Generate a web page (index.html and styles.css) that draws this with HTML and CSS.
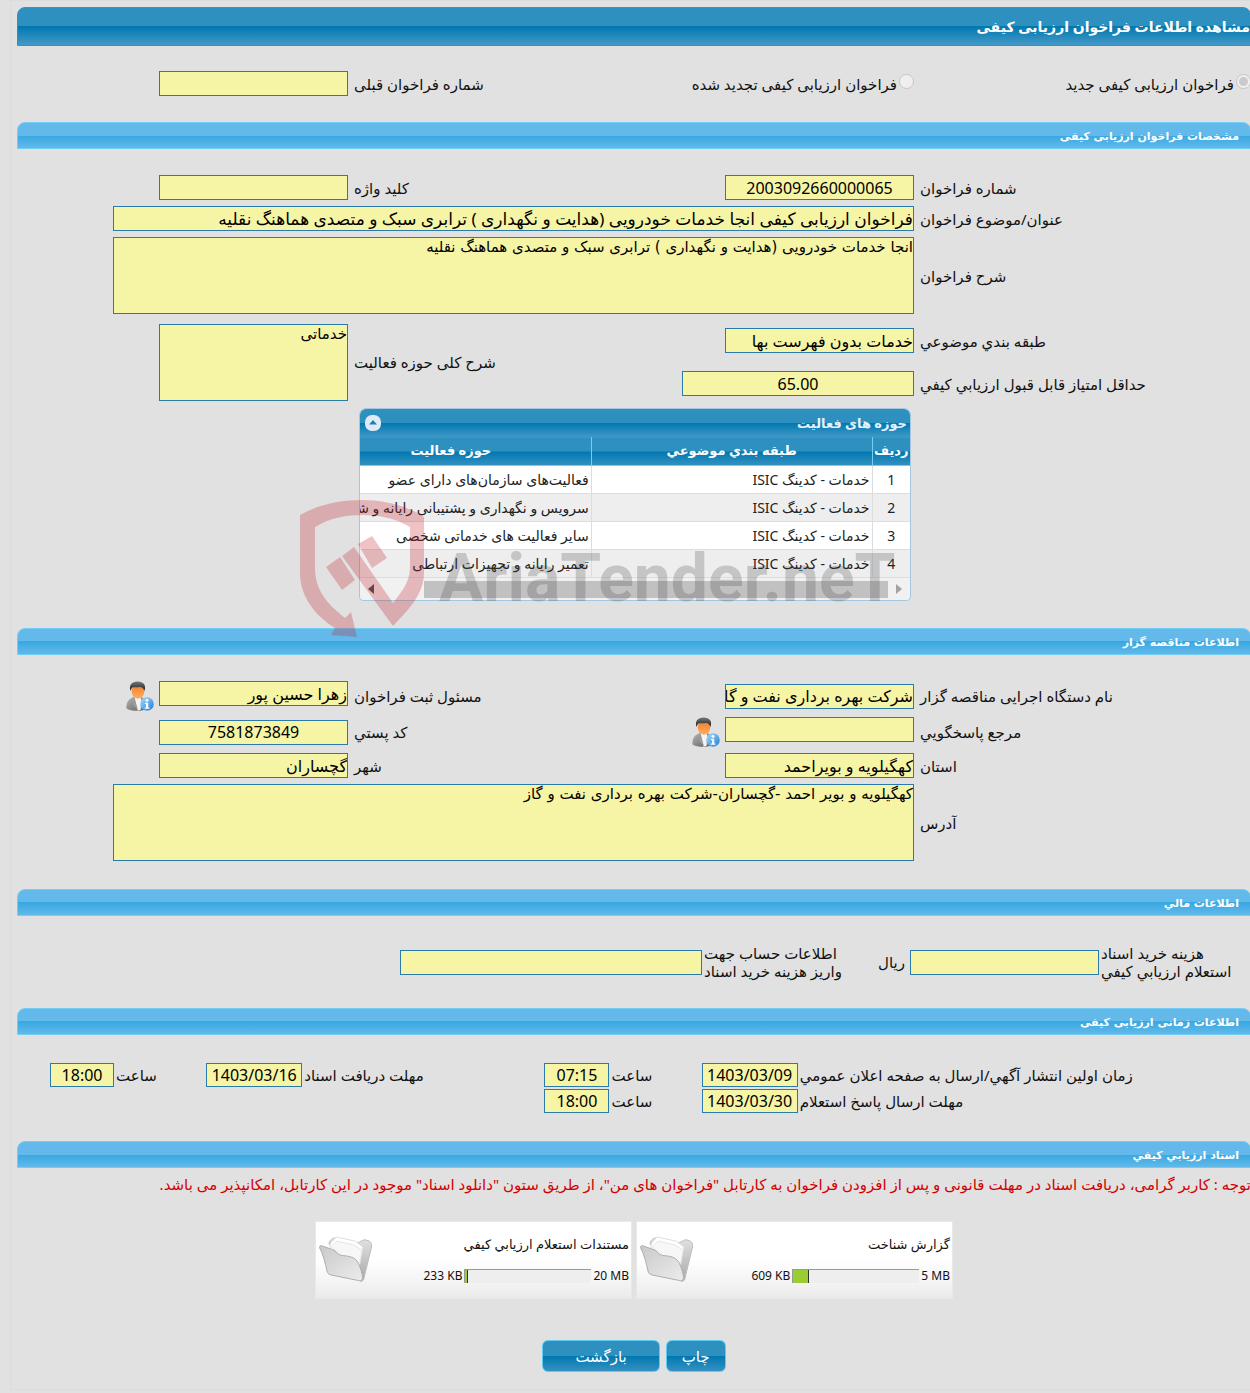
FILE: index.html
```
<!DOCTYPE html>
<html lang="fa" dir="rtl">
<head>
	<meta charset="utf-8">
	<meta name="viewport" content="width=device-width, initial-scale=1.0">
	<title>مشاهده اطلاعات فراخوان ارزیابی کیفی</title>
	<link rel="stylesheet" href="styles.css">
</head>

<body>

<!-- shared icons -->
<svg class="defs" width="0" height="0" aria-hidden="true">
	<defs>
		<linearGradient id="skin" x1="0" y1="0" x2="0" y2="1">
			<stop offset="0" stop-color="#f07a2a"/>
			<stop offset="1" stop-color="#ffb060"/>
		</linearGradient>
		<linearGradient id="hair" x1="0" y1="0" x2="0" y2="1">
			<stop offset="0" stop-color="#777"/>
			<stop offset="1" stop-color="#1c1c1c"/>
		</linearGradient>
		<linearGradient id="suit" x1="0" y1="0" x2="1" y2="1">
			<stop offset="0" stop-color="#b5b5b5"/>
			<stop offset="1" stop-color="#5c5c5c"/>
		</linearGradient>
		<linearGradient id="badge" x1="0" y1="0" x2="1" y2="1">
			<stop offset="0" stop-color="#a9dcfa"/>
			<stop offset="1" stop-color="#1c7fd8"/>
		</linearGradient>
		<linearGradient id="folder-front" x1="0" y1="0" x2="1" y2="1">
			<stop offset="0" stop-color="#c9c9c9"/>
			<stop offset="1" stop-color="#ececec"/>
		</linearGradient>
		<linearGradient id="folder-back" x1="0" y1="0" x2="0" y2="1">
			<stop offset="0" stop-color="#e2e2e2"/>
			<stop offset="1" stop-color="#a8a8a8"/>
		</linearGradient>
		<symbol id="user-info" viewBox="0 0 28 30">
			<path d="M0.5 27.5C0 21 3 17.5 8 16h7c4 1.500 6 5 6 12-4 2.500-17 2.500-20.500-.5z" fill="url(#suit)"/>
			<path d="M8.500 16h6l1 4-1 9-3 .5z" fill="#f4f4f4"/>
			<path d="M8 16l4 13-5-5z" fill="#9a9a9a"/>
			<ellipse cx="12" cy="10.500" rx="6.300" ry="7.200" fill="url(#skin)"/>
			<path d="M4.500 10C2.500 4 6 .5 11.500.5c6 0 9 3.500 7 9.500C17.500 7.500 16 6 14 6 11 6.500 8 6 6.500 6.500 5.500 7.500 5 8.500 4.500 10z" fill="url(#hair)"/>
			<circle cx="21" cy="23" r="6.800" fill="url(#badge)"/>
			<circle cx="21" cy="19.300" r="1.500" fill="#fff"/>
			<path d="M19 21.800h3.200v4.700h1.300v1.300h-4.700v-1.300h1.200v-3.400h-1z" fill="#fff"/>
		</symbol>
		<symbol id="folder" viewBox="0 0 54 50">
			<path d="M11 9c0-3 3-6 6-6l14 3c3 0 5 2 8 2 4-1 6-4 9-3l3 1c2 1 3 3 2.500 6L46 43c0 2-2 4-4 3z" fill="url(#folder-back)" stroke="#bdbdbd"/>
			<path d="M12 9l6-7 19 4 8 6-5 20-28-8z" fill="#fff" stroke="#dedede"/>
			<path d="M13 12l6-6 17 4 8 5-3 18z" fill="#f7f7f7" stroke="#e6e6e6"/>
			<path d="M1.500 12.500c0-2 1.500-2 3-1.500l11 4c2 .5 4 5 8 5.500 6 .5 14 1 17 8 2 5 4 10 4 14 0 3-2 4-4 3L13 40c-3-1-3.500-2-4-4-2-9-4-17-7.500-23.500z" fill="url(#folder-front)" stroke="#adadad"/>
		</symbol>
	</defs>
</svg>

<div class="page">
	<h1 class="page-title">مشاهده اطلاعات فراخوان ارزیابی کیفی</h1>

	<form action="#">
	<div class="fields fields-type">
		<div class="choice">
			<input type="radio" name="type" id="type-new" checked disabled>
			<label for="type-new">فراخوان ارزیابی کیفی جدید</label>
		</div>
		<div class="choice">
			<input type="radio" name="type" id="type-renew" disabled>
			<label for="type-renew">فراخوان ارزیابی کیفی تجدید شده</label>
		</div>
		<label for="prev-no">شماره فراخوان قبلی</label>
		<input class="box short" type="text" id="prev-no" readonly>
	</div>

	<section>
		<h2 class="bar">مشخصات فراخوان ارزیابی کیفی</h2>
		<div class="fields">
			<label for="call-no">شماره فراخوان</label>
			<input class="box short num" type="text" id="call-no" value="2003092660000065" readonly>
			<label for="keyword">کلید واژه</label>
			<input class="box short" type="text" id="keyword" readonly>
			<label for="subject">عنوان/موضوع فراخوان</label>
			<input class="box wide" type="text" id="subject" value="فراخوان ارزیابی کیفی انجا خدمات خودرویی (هدایت و نگهداری ) ترابری سبک و متصدی هماهنگ نقلیه" readonly>
			<label for="desc">شرح فراخوان</label>
			<textarea class="box wide" id="desc" readonly>انجا خدمات خودرویی (هدایت و نگهداری ) ترابری سبک و متصدی هماهنگ نقلیه</textarea>
		</div>
		<div class="fields fields-class">
			<label for="category">طبقه بندي موضوعي</label>
			<input class="box short" type="text" id="category" value="خدمات بدون فهرست بها" readonly>
			<label class="two-rows" for="area">شرح کلی حوزه فعالیت</label>
			<textarea class="box short two-rows" id="area" readonly>خدماتی</textarea>
			<label for="score">حداقل امتیاز قابل قبول ارزيابي كيفي</label>
			<input class="box medium num" type="text" id="score" value="65.00" readonly>
		</div>

		<div class="grid-wrap">
			<div class="grid">
				<div class="grid-title">
					<span>حوزه های فعالیت</span>
					<button type="button" class="collapse" aria-label="بستن">
						<svg width="16" height="16" viewBox="0 0 16 16"><rect width="16" height="16" rx="7" fill="#dfeaf7"/><path d="M8 5l4 4.500H4z" fill="#1f7fb5"/></svg>
					</button>
				</div>
				<div class="grid-body">
					<table>
						<colgroup><col class="col-no"><col class="col-text"><col class="col-text"></colgroup>
						<thead>
							<tr><th>ردیف</th><th>طبقه بندي موضوعي</th><th>حوزه فعالیت</th></tr>
						</thead>
						<tbody>
							<tr><td>1</td><td>خدمات - کدینگ ISIC</td><td>فعالیت‌های سازمان‌های دارای عضو</td></tr>
							<tr><td>2</td><td>خدمات - کدینگ ISIC</td><td>سرویس و نگهداری و پشتیبانی رایانه و شبکه</td></tr>
							<tr><td>3</td><td>خدمات - کدینگ ISIC</td><td>سایر فعالیت های خدماتی شخصی</td></tr>
							<tr><td>4</td><td>خدمات - کدینگ ISIC</td><td>تعمیر رایانه و تجهیزات ارتباطی</td></tr>
						</tbody>
					</table>
				</div>
				<div class="scroll">
					<svg width="8" height="10" viewBox="0 0 8 10"><path d="M1 0l6 5-6 5z" fill="#a3a3a3"/></svg>
					<div class="thumb"></div>
					<svg width="8" height="10" viewBox="0 0 8 10"><path d="M7 0L1 5l6 5z" fill="#505050"/></svg>
				</div>
			</div>
			<svg class="watermark" viewBox="0 0 610 142" aria-hidden="true">
				<g fill="#c01820" fill-opacity=".26">
					<path d="M1 17C20 6 42 2 63 2s44 5 62 17v56c0 22-17 38-31 53L43 58l12-9 39 56c8-11 17-20 17-36V29C96 20 80 17 63 17S31 20 16 29v40c0 22 10 35 30 51l6-6 6 25-26-2 4-7C12 115 1 95 1 75z"/>
					<path d="M27 69l14-10 15 23-13 10zM59 46l14-8 15 22-15 10z"/>
				</g>
				<text x="140" y="103" fill="#444" fill-opacity=".24" direction="ltr">AriaTender.neT</text>
			</svg>
		</div>
	</section>

	<section>
		<h2 class="bar">اطلاعات مناقصه گزار</h2>
		<div class="fields">
			<label for="org">نام دستگاه اجرایی مناقصه گزار</label>
			<input class="box short" type="text" id="org" value="شرکت بهره برداری نفت و گاز گچساران" readonly>
			<label for="registrar">مسئول ثبت فراخوان</label>
			<div class="with-icon">
				<input class="box short" type="text" id="registrar" value="زهرا حسین پور" readonly>
				<button type="button" aria-label="اطلاعات مسئول ثبت"><svg width="28" height="30"><use href="#user-info"/></svg></button>
			</div>
			<label for="contact">مرجع پاسخگويي</label>
			<div class="with-icon">
				<input class="box short" type="text" id="contact" readonly>
				<button type="button" aria-label="اطلاعات مرجع پاسخگويي"><svg width="28" height="30"><use href="#user-info"/></svg></button>
			</div>
			<label for="postal">کد پستي</label>
			<input class="box short num" type="text" id="postal" value="7581873849" readonly>
			<label for="province">استان</label>
			<input class="box short" type="text" id="province" value="کهگیلویه و بویراحمد" readonly>
			<label for="city">شهر</label>
			<input class="box short" type="text" id="city" value="گچساران" readonly>
			<label for="address">آدرس</label>
			<textarea class="box wide" id="address" readonly>کهگیلویه و بویر احمد -گچساران-شرکت بهره برداری نفت و گاز</textarea>
		</div>
	</section>

	<section>
		<h2 class="bar">اطلاعات مالي</h2>
		<div class="money">
			<label for="fee">هزینه خرید اسناد<br>استعلام ارزيابي كيفي</label>
			<input class="box short" type="text" id="fee" readonly>
			<span class="unit">ریال</span>
			<label for="account">اطلاعات حساب جهت<br>واریز هزینه خرید اسناد</label>
			<input class="box account" type="text" id="account" readonly>
		</div>
	</section>

	<section>
		<h2 class="bar">اطلاعات زمانی ارزیابی کیفی</h2>
		<div class="times">
			<label for="publish">زمان اولین انتشار آگهي/ارسال به صفحه اعلان عمومي</label>
			<input class="box num" type="text" id="publish" value="1403/03/09" readonly>
			<label for="publish-time">ساعت</label>
			<input class="box num" type="text" id="publish-time" value="07:15" readonly>
			<label for="receive">مهلت دریافت اسناد</label>
			<input class="box num" type="text" id="receive" value="1403/03/16" readonly>
			<label for="receive-time">ساعت</label>
			<input class="box num" type="text" id="receive-time" value="18:00" readonly>
			<label class="line-start" for="reply">مهلت ارسال پاسخ استعلام</label>
			<input class="box num" type="text" id="reply" value="1403/03/30" readonly>
			<label for="reply-time">ساعت</label>
			<input class="box num" type="text" id="reply-time" value="18:00" readonly>
		</div>
	</section>

	<section>
		<h2 class="bar">اسناد ارزيابي كيفي</h2>
		<p class="notice">توجه : کاربر گرامی، دریافت اسناد در مهلت قانونی و پس از افزودن فراخوان به کارتابل "فراخوان های من"، از طریق ستون "دانلود اسناد" موجود در این کارتابل، امکانپذیر می باشد.</p>
		<div class="files">
			<div class="file">
				<div class="file-info">
					<label for="file-1">گزارش شناخت</label>
					<div class="size"><span>609 KB</span><progress id="file-1" max="5000" value="609"></progress><span>5 MB</span></div>
				</div>
				<svg width="54" height="50"><use href="#folder"/></svg>
			</div>
			<div class="file">
				<div class="file-info">
					<label for="file-2">مستندات استعلام ارزيابي كيفي</label>
					<div class="size"><span>233 KB</span><progress id="file-2" max="20000" value="400"></progress><span>20 MB</span></div>
				</div>
				<svg width="54" height="50"><use href="#folder"/></svg>
			</div>
		</div>
	</section>

	<div class="buttons">
		<button type="button" class="btn">چاپ</button>
		<button type="button" class="btn btn-back">بازگشت</button>
	</div>
	</form>
</div>

</body>
</html>
```
FILE: styles.css
```
* { box-sizing: border-box; }
body { margin: 0; background: #e1e1e1; color: #111; font-family: "Noto Sans", "DejaVu Sans", sans-serif; font-size: 15px; line-height: 18px; overflow-x: hidden; }
.defs { position: absolute; }
.page { margin: 0 -1px 4px 10px; border: 1px solid #dcdcdc; border-right: 0; padding: 6px 0 17px 6px; }

.page-title { margin: 0; height: 39px; line-height: 37px; font-size: 14px; color: #fff; border: 1px solid #2e92d0; border-radius: 8px 8px 0 0; background: linear-gradient(#2e90bf 50%, #0078b0 50%, #4499c6); }
.bar { margin: 0; height: 27px; line-height: 27px; padding: 0 11px; font-family: "DejaVu Sans", sans-serif; font-size: 11px; color: #fff; border: 1px solid #74cdf5; border-radius: 8px 8px 0 0; background: linear-gradient(#63baea 50%, #37a8e1 50%, #62b9ea); }

/* label / field pairs */
.fields { display: grid; grid-template-columns: minmax(0, 337fr) minmax(0, 400fr) minmax(0, 166fr) minmax(0, 331fr); row-gap: 6px; align-items: center; padding-top: 26px; }
.fields label { text-align: left; padding-left: 6px; white-space: nowrap; }
.fields-type { padding: 25px 0 26px; }
.fields-class { grid-auto-rows: 43px; row-gap: 0; padding-top: 5px; }
.fields .choice { display: flex; align-items: center; }
.choice label { padding: 0; }
.choice input { width: 15px; height: 15px; margin: 0 0 4px 2px; }
.fields-class .two-rows { grid-row: 1 / 3; }
label.two-rows { grid-column: 3; }
textarea.two-rows { grid-column: 4; }

.box { display: block; min-width: 0; height: 25px; margin: 0; padding: 0; border: 1px solid #2a7aab; border-radius: 0; background: #f6f4a5; color: #000; font-family: inherit; font-size: 16px; outline: none; }
.num { text-align: center; }
.short { width: 189px; }
.medium { width: 232px; }
.fields .wide { grid-column: 2 / 5; margin-left: 96px; font-size: 17px; }
.fields textarea.box { height: 77px; font-family: "DejaVu Sans", sans-serif; font-size: 15px; line-height: 19px; resize: none; overflow: hidden; }
.with-icon { display: flex; align-items: flex-start; gap: 5px; }
.with-icon button { padding: 0; border: 0; background: none; height: 30px; }

/* activity grid */
.grid-wrap { position: relative; width: 552px; margin: 3px 340px 27px 0; }
.grid { border: 1px solid #a3c8e0; border-radius: 7px 7px 4px 4px; background: #f1f1f1; overflow: hidden; }
.grid-title { display: flex; justify-content: space-between; align-items: center; height: 28px; padding: 0 3px 0 5px; font-size: 13px; color: #e4f2fb; font-weight: bold; background: linear-gradient(#2e90bf 50%, #0078b0 50%, #3f98c6); }
.collapse { padding: 0; border: 0; background: none; height: 16px; }
.grid-body { overflow: hidden; }
.grid table { width: 600px; table-layout: fixed; border-collapse: collapse; }
.col-no { width: 38px; }
.grid th { height: 28px; padding: 0 0 4px; font-size: 13px; color: #fff; border-left: 1px solid #74cdf5; border-bottom: 1px solid #74cdf5; border-top: 1px solid #3c93cf; background: linear-gradient(#2e90bf 50%, #0078b0 50%, #3591c1); white-space: nowrap; }
.grid td { height: 28px; padding: 1px 2px 0; font-size: 14px; color: #222; background: #fff; border-left: 1px solid #ddd; border-bottom: 1px solid #ddd; white-space: nowrap; }
.grid tr:nth-child(even) td { background: #eee; }
.grid td:first-child { text-align: center; }
.scroll { display: flex; align-items: center; gap: 4px; height: 22px; padding: 0 7px; }
.thumb { flex: 1; height: 17px; margin: 0 3px 0 45px; background: #c1c1c1; }
.watermark { position: absolute; left: -60px; top: 90px; width: 610px; height: 142px; pointer-events: none; overflow: visible; }
.watermark text { font: bold 66px "Roboto", sans-serif; }

section { padding-bottom: 28px; }
section:nth-of-type(1) { padding-bottom: 0; }

.money { display: flex; align-items: center; padding: 28px 12px 0 0; }
.money label { width: 140px; padding-left: 2px; text-align: left; white-space: nowrap; }
.money .unit { margin: 0 5px 0 36px; }
.account { width: 302px; }

.times { display: grid; grid-template-columns: 453fr 96fr 92fr 65fr 242fr 96fr 92fr 64fr 33fr; row-gap: 2px; align-items: center; padding-top: 28px; }
.times label { text-align: left; padding-left: 2px; white-space: nowrap; }
.times .box { width: 100%; height: 24px; }
.line-start { grid-column: 1; }

.notice { margin: 7px 0 28px; color: #d40000; white-space: nowrap; }
.files { display: flex; justify-content: center; gap: 4px; }
.file { display: flex; justify-content: space-between; align-items: center; width: 317px; height: 78px; padding: 0 2px; font-size: 13px; border: 1px solid #e8e8e8; background: linear-gradient(#fff 50%, #ebebeb); }
.file-info { display: flex; flex-direction: column; gap: 14px; }
.size { display: flex; direction: ltr; justify-content: flex-end; align-items: center; gap: 2px; font-size: 12px; }
progress { appearance: none; width: 127px; height: 14px; border: 0; border-top: 1px solid #999; border-left: 1px solid #999; }
progress::-webkit-progress-bar { background: #eee; }
progress::-webkit-progress-value { background: #9acd32; border-right: 1px solid #333; }

.buttons { display: flex; justify-content: center; gap: 6px; padding-top: 13px; }
.btn { height: 32px; padding: 0 15px; font-family: inherit; font-size: 15px; color: #fff; border: 1px solid #5fcbf2; border-radius: 6px; background: linear-gradient(#2e90bf 50%, #0078b0 50%, #3591c1); }
.btn-back { padding: 0 32px; }
```
